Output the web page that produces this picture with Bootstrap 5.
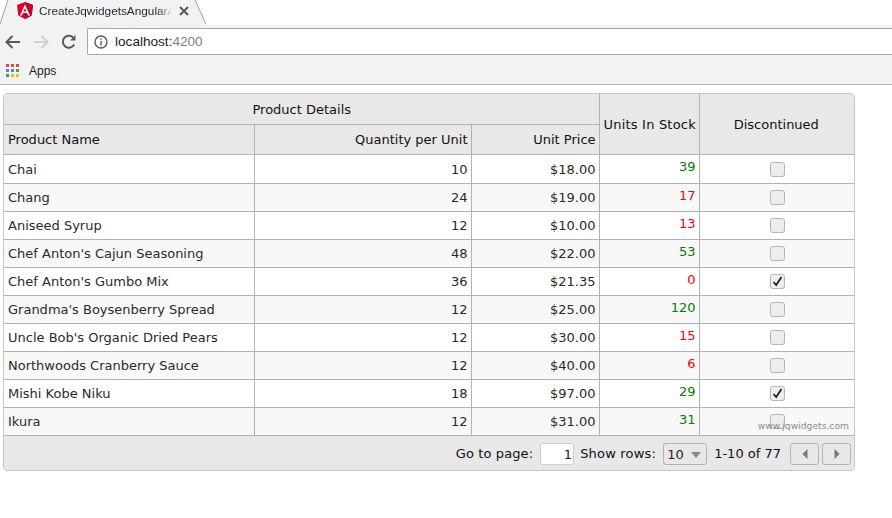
<!DOCTYPE html>
<html lang="en">
<head>
  <meta charset="UTF-8" />
  <meta name="viewport" content="width=device-width, initial-scale=1.0"/>
  <title>CreateJqwidgetsAngularApp</title>
  <link href="https://cdn.jsdelivr.net/npm/bootstrap@5.3.3/dist/css/bootstrap.min.css" rel="stylesheet" />
  <style>
    html, body { height: 100%; overflow: hidden; }
    body { background: #fff; font-family: "DejaVu Sans", Verdana, sans-serif; font-size: 13px; color: #222; }

    /* browser chrome */
    .tab-strip { height: 25px; background: #fff; }
    .chrome-tab { position: relative; width: 206px; height: 25px; padding: 0 0 4px 17px; }
    .tab-shape { position: absolute; left: 0; top: 0; z-index: 0; }
    .chrome-tab > :not(.tab-shape) { position: relative; z-index: 1; }
    .tab-title { width: 133px; overflow: hidden; white-space: nowrap; margin-left: 6px; font: 11.8px "Liberation Sans", Arial, sans-serif; color: #1d2733;
      -webkit-mask-image: linear-gradient(to right, #000 90%, transparent); mask-image: linear-gradient(to right, #000 90%, transparent); }
    .tab-close { margin-left: 7px; }
    .tool-bar { height: 35px; background: #f2f2f2; padding: 3px 0 5px 5px; }
    .nav-icons { width: 82px; gap: 12px; }
    .url-box { flex: 1; height: 27px; background: #fff; border: 1px solid #a9a9a9; border-right: 0; border-radius: 2px 0 0 2px; padding-left: 6px;
      font: 13.6px "Liberation Sans", Arial, sans-serif; color: #222; }
    .url-text { margin-left: 7px; }
    .url-port { color: #7a7f85; }
    .bookmark-bar { height: 25px; background: #f2f2f2; border-bottom: 1px solid #b9b9b9; padding: 0 0 3px 6px; font: 12px "Liberation Sans", Arial, sans-serif; color: #222; }
    .bookmark-label { margin-left: 9px; }

    /* grid */
    .grid-wrap { position: relative; width: 852px; margin: 8px 0 0 3px; border: 1px solid #c7c7c7; border-radius: 4px; overflow: hidden; }
    .jq-grid { table-layout: fixed; border-collapse: collapse; width: 850px; margin: 0; }
    .jq-grid th, .jq-grid td { border: 1px solid #b3b3b3; padding: 0 3px 0 4px; font-weight: 400; overflow: hidden; white-space: nowrap; }
    .jq-grid tr > :first-child { border-left: 0; }
    .jq-grid tr > :last-child { border-right: 0; }
    .jq-grid thead tr:first-child th { border-top: 0; }
    .jq-grid th { background: #e8e8e8; color: #111; height: 30px; padding-top: 2px; }
    .jq-grid th.stock-head { letter-spacing: .2px; }
    .jq-grid th.disc-head { padding-right: 5px; }
    .jq-grid td { height: 28px; padding-top: 2px; background: #fff; color: #2a2a2a; }
    .jq-grid tbody tr:first-child td { height: 29px; }
    .jq-grid tbody tr:nth-child(even) td { background: #f8f8f8; }
    .jq-grid tbody tr:last-child td { border-bottom: 0; padding-bottom: 1px; }
    .jq-grid td.stock-cell { vertical-align: top; padding-top: 2px; }
    .jq-grid td.stock-up { color: #008000; }
    .jq-grid td.stock-down { color: #ff0000; }
    .jq-grid td.check-cell { padding: 1px 2px 0 4px; }
    .fake-check { display: block; width: 15px; height: 15px; margin: 0 auto; background: #ededed; border: 1px solid #b5b5b5; border-radius: 3px; }
    .watermark { position: absolute; right: 5px; bottom: 37px; font-size: 9.2px; color: #8b8b8b; }
    .pager-bar { height: 35px; background: #e8e8e8; border-top: 1px solid #b3b3b3; padding: 2px 3px 0 0; color: #111; }
    .goto-label { letter-spacing: .1px; }
    .rows-label { letter-spacing: .2px; }
    .page-input { width: 34px; height: 22px; background: #fff; border: 1px solid #ccc; border-radius: 3px; text-align: right; padding: 1px 1px 0 0; margin: 0 6px 0 7px; color: #222; }
    .rows-select { width: 44px; height: 22px; border: 1px solid #b3b3b3; border-radius: 3px; padding: 1px 0 0 3px; margin: 0 7px 0 7px; color: #222; }
    .rows-caret { width: 0; height: 0; margin: 0 0 0 7px; border: 5px solid transparent; border-top: 6px solid #8a8a8a; border-bottom: 0; }
    .page-btn { width: 29px; height: 22px; border: 1px solid #b3b3b3; border-radius: 3px; margin-left: 3px; }
    .range-text { margin-right: 6px; }
  </style>
</head>
<body>

  <!-- Browser chrome -->
  <div class="tab-strip">
    <div class="chrome-tab d-flex align-items-center">
      <svg class="tab-shape" width="206" height="25" viewBox="0 0 206 25">
        <path d="M0 25 L8 0 H195 L206 25Z" fill="#f2f2f2"/>
        <path d="M0 24 L8 0 M195 0 L206 24" stroke="#a0a0a0" fill="none"/>
      </svg>
      <svg width="16" height="17" viewBox="0 0 16 17">
        <path d="M8 0 L16 3 L14.7 13.5 L8 17 L1.3 13.5 L0 3Z" fill="#dd0031"/>
        <path d="M8 0 L16 3 L14.7 13.5 L8 17Z" fill="#c3002f"/>
        <path d="M8 2.5 L3 13.5 H4.9 L5.9 11 H10.1 L11.1 13.5 H13 Z M6.6 9.4 L8 6 L9.4 9.4Z" fill="#fff"/>
      </svg>
      <div class="tab-title">CreateJqwidgetsAngularApp</div>
      <svg class="tab-close" width="10" height="10" viewBox="0 0 10 10"><path d="M1 1 L9 9 M9 1 L1 9" stroke="#5a5a5a" stroke-width="2"/></svg>
    </div>
  </div>
  <div class="tool-bar d-flex align-items-center">
    <div class="nav-icons d-flex align-items-center">
      <svg width="16" height="14" viewBox="0 0 16 14" fill="none" stroke="#5a5a5a" stroke-width="2"><path d="M15 7 H2 M7.5 1 L1.5 7 L7.5 13"/></svg>
      <svg width="16" height="14" viewBox="0 0 16 14" fill="none" stroke="#cfcfcf" stroke-width="2"><path d="M1 7 H14 M8.5 1 L14.5 7 L8.5 13"/></svg>
      <svg width="16" height="16" viewBox="0 0 16 16" fill="none" stroke="#5a5a5a" stroke-width="2"><path d="M13.2 10.5 A6 6 0 1 1 12.6 4"/><path d="M14.5 1 V6.5 H9" fill="#5a5a5a" stroke="none"/></svg>
    </div>
    <div class="url-box d-flex align-items-center">
      <svg width="14" height="14" viewBox="0 0 14 14" fill="none" stroke="#5a5a5a" stroke-width="1.4"><circle cx="7" cy="7" r="6"/><path d="M7 6 V10.5 M7 3.2 V4.8"/></svg>
      <span class="url-text"><span>localhost:</span><span class="url-port">4200</span></span>
    </div>
  </div>
  <div class="bookmark-bar d-flex align-items-center">
    <svg width="14" height="14" viewBox="0 0 14 14">
      <rect x="0" y="0" width="3" height="3" fill="#e8453c"/><rect x="5" y="0" width="3" height="3" fill="#e8453c"/><rect x="10" y="0" width="3" height="3" fill="#e8453c"/>
      <rect x="0" y="5" width="3" height="3" fill="#4285f4"/><rect x="5" y="5" width="3" height="3" fill="#4285f4"/><rect x="10" y="5" width="3" height="3" fill="#34a853"/>
      <rect x="0" y="10" width="3" height="3" fill="#34a853"/><rect x="5" y="10" width="3" height="3" fill="#fbbc05"/><rect x="10" y="10" width="3" height="3" fill="#fbbc05"/>
    </svg>
    <span class="bookmark-label">Apps</span>
  </div>

  <!-- Grid -->
  <div class="grid-wrap">
    <table class="jq-grid">
      <colgroup>
        <col style="width:250px"><col style="width:217px"><col style="width:128px"><col style="width:100px"><col style="width:155px">
      </colgroup>
      <thead>
        <tr>
          <th colspan="3" class="text-center">Product Details</th>
          <th rowspan="2" class="text-center stock-head">Units In Stock</th>
          <th rowspan="2" class="text-center disc-head">Discontinued</th>
        </tr>
        <tr>
          <th>Product Name</th>
          <th class="text-end">Quantity per Unit</th>
          <th class="text-end">Unit Price</th>
        </tr>
      </thead>
      <tbody id="gridRows"></tbody>
    </table>
    <span class="watermark">www.jqwidgets.com</span>
    <div class="pager-bar d-flex align-items-center justify-content-end">
      <span class="goto-label">Go to page:</span>
      <div class="page-input">1</div>
      <span class="rows-label">Show rows:</span>
      <div class="rows-select d-flex align-items-center">10<span class="rows-caret"></span></div>
      <span class="range-text">1-10 of 77</span>
      <div class="page-btn d-flex align-items-center justify-content-center">
        <svg width="6" height="10" viewBox="0 0 6 10"><path d="M5.5 0 V10 L0.5 5Z" fill="#777"/></svg>
      </div>
      <div class="page-btn d-flex align-items-center justify-content-center">
        <svg width="6" height="10" viewBox="0 0 6 10"><path d="M0.5 0 V10 L5.5 5Z" fill="#777"/></svg>
      </div>
    </div>
  </div>

  <script>
    const products = [
      ["Chai", 10, "$18.00", 39, false],
      ["Chang", 24, "$19.00", 17, false],
      ["Aniseed Syrup", 12, "$10.00", 13, false],
      ["Chef Anton's Cajun Seasoning", 48, "$22.00", 53, false],
      ["Chef Anton's Gumbo Mix", 36, "$21.35", 0, true],
      ["Grandma's Boysenberry Spread", 12, "$25.00", 120, false],
      ["Uncle Bob's Organic Dried Pears", 12, "$30.00", 15, false],
      ["Northwoods Cranberry Sauce", 12, "$40.00", 6, false],
      ["Mishi Kobe Niku", 18, "$97.00", 29, true],
      ["Ikura", 12, "$31.00", 31, false]
    ];
    const tick = `<svg class="d-block" width="13" height="13" viewBox="0 0 13 13" fill="none" stroke="#222" stroke-width="1.8"><path d="M2.5 7 L5.2 10 L10.5 2"/></svg>`;
    document.getElementById("gridRows").innerHTML = products.map(p => `
      <tr>
        <td>${p[0]}</td>
        <td class="text-end">${p[1]}</td>
        <td class="text-end">${p[2]}</td>
        <td class="text-end stock-cell ${p[3] < 20 ? "stock-down" : "stock-up"}">${p[3]}</td>
        <td class="check-cell"><span class="fake-check">${p[4] ? tick : ""}</span></td>
      </tr>`).join("");
  </script>
  <script src="https://cdn.jsdelivr.net/npm/bootstrap@5.3.3/dist/js/bootstrap.bundle.min.js"></script>
</body>
</html>
